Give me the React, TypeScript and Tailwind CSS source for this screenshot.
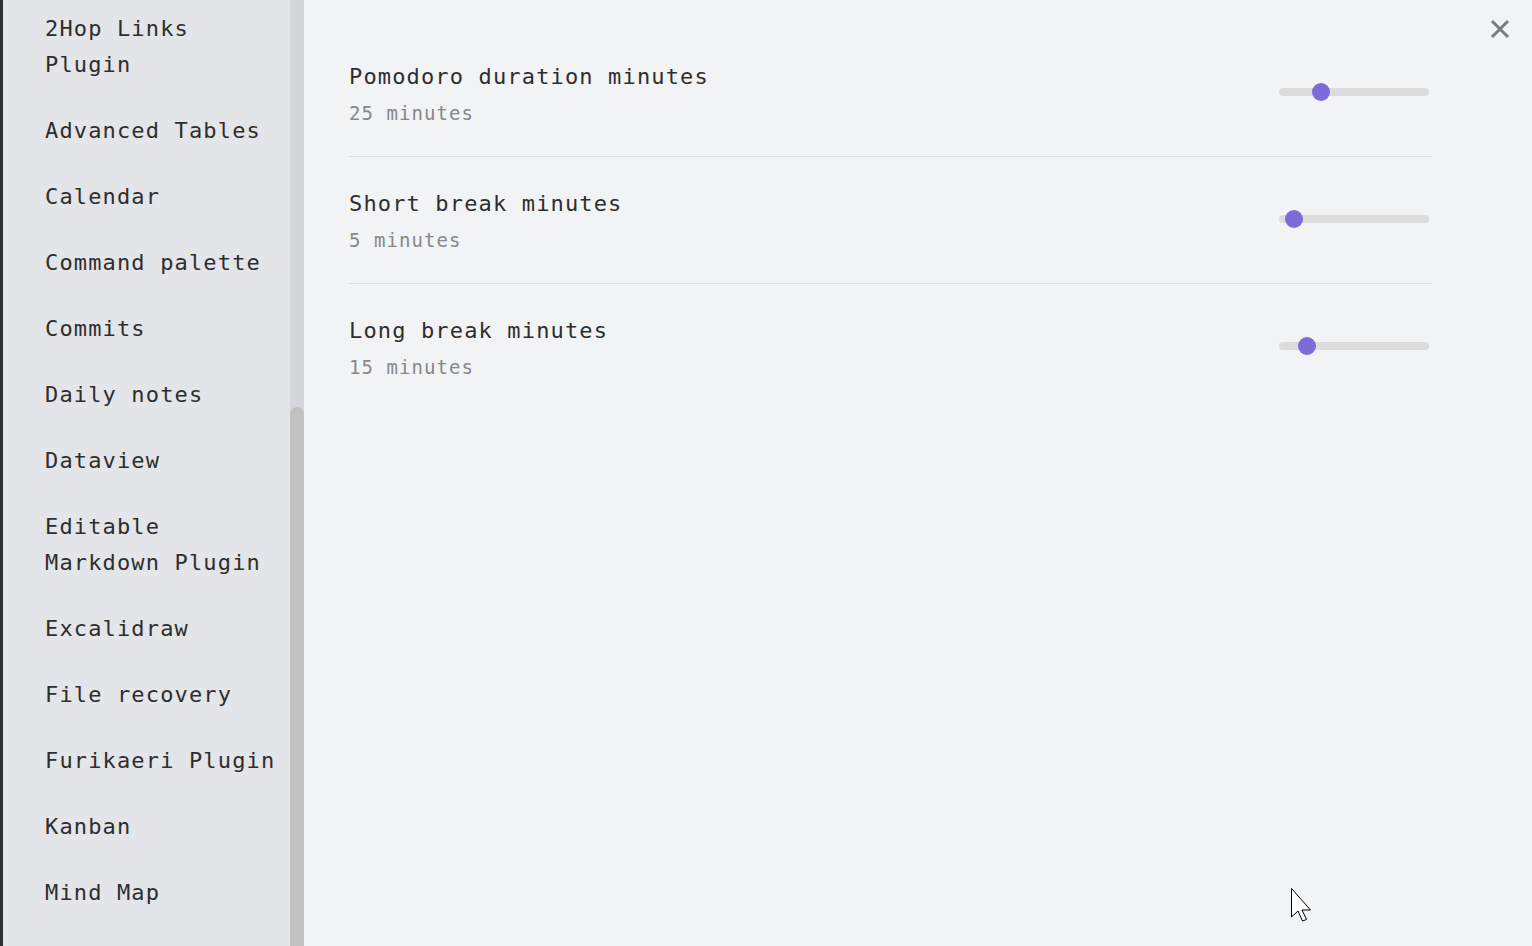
import React from "react";

const items: string[] = [
  "2Hop Links Plugin",
  "Advanced Tables",
  "Calendar",
  "Command palette",
  "Commits",
  "Daily notes",
  "Dataview",
  "Editable Markdown Plugin",
  "Excalidraw",
  "File recovery",
  "Furikaeri Plugin",
  "Kanban",
  "Mind Map",
];

const settings = [
  { name: "Pomodoro duration minutes", desc: "25 minutes", pos: 42 },
  { name: "Short break minutes", desc: "5 minutes", pos: 15 },
  { name: "Long break minutes", desc: "15 minutes", pos: 28 },
];

function Slider({ pos }: { pos: number }) {
  return (
    <div className="relative w-[150px] h-[8px] rounded-full bg-[#dcdcdc] mr-[3px] mb-[4px]">
      <div
        className="absolute top-1/2 w-[18px] h-[18px] rounded-full bg-[#7b6cd9] -translate-x-1/2 -translate-y-1/2"
        style={{ left: pos }}
      />
    </div>
  );
}

export default function App() {
  return (
    <div
      className="relative flex w-[1532px] h-[946px] overflow-hidden bg-[#f2f3f5] text-[#2e2e2e]"
      style={{ fontFamily: '"DejaVu Sans Mono", "Liberation Mono", monospace' }}
    >
      {/* Sidebar */}
      <div className="flex h-full shrink-0">
        <div className="w-[3px] h-full bg-[#2f2f2f]" />
        <div className="w-[287px] h-full bg-[#e3e5e8] overflow-hidden">
          <div className="-mt-[4px] pl-[42px] pr-[7px]">
            {items.map((t) => (
              <div
                key={t}
                className="py-[15px] text-[22px] leading-[36px] tracking-[1.15px]"
              >
                {t}
              </div>
            ))}
          </div>
        </div>
        <div className="w-[14px] h-full bg-[#d5d6d9] flex flex-col">
          <div className="h-[407px] shrink-0" />
          <div className="flex-1 rounded-t-full bg-[#c1c1c1]" />
        </div>
      </div>

      {/* Main */}
      <div className="flex-1 pl-[45px] pr-[100px] pt-[30px]">
        {settings.map((s, i) => (
          <div
            key={s.name}
            className={`flex items-center justify-between pt-[33px] pb-[31px] ${
              i < settings.length - 1 ? "border-b border-[#dcdde0]" : ""
            }`}
          >
            <div>
              <div className="text-[22px] leading-[28px] tracking-[1.15px] text-[#2e2e2e]">
                {s.name}
              </div>
              <div className="mt-[10px] text-[19px] leading-[24px] tracking-[1.05px] text-[#888888]">
                {s.desc}
              </div>
            </div>
            <Slider pos={s.pos} />
          </div>
        ))}
      </div>

      {/* Close */}
      <div className="absolute left-[1490px] top-[19px] w-[20px] h-[20px]">
        <svg width="20" height="20" viewBox="0 0 20 20">
          <path d="M2 2 L18 18 M18 2 L2 18" stroke="#7a7a7a" strokeWidth="3" strokeLinecap="butt" />
        </svg>
      </div>

      {/* Cursor */}
      <div className="absolute left-[1290px] top-[887px]">
        <svg width="26" height="40" viewBox="0 0 26 40">
          <path
            d="M1.5 1.5 L1.5 30 L8 24 L12.5 34 L16.5 32.5 L12 23 L20.5 23 Z"
            fill="#ffffff"
            stroke="#000000"
            strokeWidth="1"
          />
        </svg>
      </div>
    </div>
  );
}
